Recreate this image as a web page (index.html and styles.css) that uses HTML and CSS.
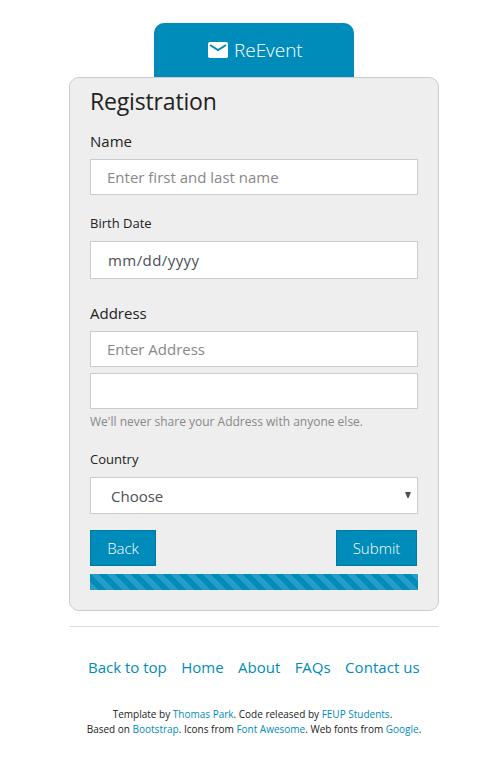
FILE: index.html
```html
<!DOCTYPE html>
<html lang="en">
<head>
<meta charset="utf-8">
<title>ReEvent</title>
<link rel="stylesheet" href="styles.css">
</head>
<body>
<div class="page">
  <header class="brand">
    <svg class="brand-icon" viewBox="0 0 20 16" width="20" height="16"><rect width="20" height="16" rx="1.8" fill="#fff"/><path d="M2 3l8 5 8-5" fill="none" stroke="#008cba" stroke-width="2"/></svg>
    <span class="brand-name">ReEvent</span>
  </header>
  <main class="card">
    <h1 class="title">Registration</h1>
    <div class="field name">
      <label class="label">Name</label>
      <div class="control placeholder"><span>Enter first and last name</span></div>
    </div>
    <div class="field birth">
      <label class="label small">Birth Date</label>
      <div class="control date"><span>mm/dd/yyyy</span></div>
    </div>
    <div class="field address">
      <label class="label">Address</label>
      <div class="control placeholder"><span>Enter Address</span></div>
      <div class="control"></div>
      <p class="help">We'll never share your Address with anyone else.</p>
    </div>
    <div class="field country">
      <label class="label small">Country</label>
      <div class="control select"><span>Choose</span><svg class="arrow" viewBox="0 0 6 6" width="6" height="6"><path d="M0 0h6L3.5 6h-1z" fill="#495057"/></svg></div>
    </div>
    <div class="actions">
      <button class="btn back">Back</button>
      <button class="btn submit">Submit</button>
    </div>
    <div class="progress"></div>
  </main>
  <footer class="footer">
    <nav class="links"><a>Back to top</a><a>Home</a><a>About</a><a>FAQs</a><a class="contact">Contact us</a></nav>
    <p class="credit release"><span>Template by <a>Thomas Park</a>. Code released by <a>FEUP Students</a>.</span></p>
    <p class="credit"><span>Based on <a>Bootstrap</a>. Icons from <a>Font Awesome</a>. Web fonts from <a>Google</a>.</span></p>
  </footer>
</div>
</body>
</html>
```
FILE: styles.css
```css
* { box-sizing: border-box; }
body {
  margin: 0;
  background: #fff;
  color: #222;
  font: 400 15px/22px "Open Sans", "Liberation Sans", sans-serif;
}
span { white-space: nowrap; }
a { color: #008cba; text-decoration: none; }
.page { width: 370px; margin: 0 0 0 69px; padding-top: 23px; }
.brand {
  display: flex;
  align-items: center;
  width: 200px;
  height: 54px;
  margin-left: 85px;
  padding-left: 54px;
  border-radius: 10px 10px 0 0;
  background: #008cba;
  color: #fff;
  font-size: 19px;
  font-weight: 300;
}
.brand-icon { margin-right: 6px; }
.brand-name { letter-spacing: -.05px; }
.card {
  height: 534px;
  padding: 7px 20px 0;
  border: 1px solid #ccc;
  border-radius: 10px;
  background: #eee;
}
.title { margin: 0; font-size: 23px; line-height: 32px; font-weight: 400; letter-spacing: -.17px; }
.label { display: block; height: 22px; }
.small { font-size: 13px; }
.name { margin-top: 13px; }
.control {
  display: flex;
  align-items: center;
  height: 36px;
  margin-top: 6px;
  padding: 0 16px;
  border: 1px solid #ccc;
  background: #fff;
  color: #495057;
}
.label + .control { margin-top: 7px; }
.placeholder { color: #888; }
.birth { margin-top: 17px; }
.control.date { height: 38px; padding-left: 17px; letter-spacing: .43px; }
.address { margin-top: 23px; }
.help { margin: 3px 0 0; color: #888; font-size: 12px; line-height: 20px; }
.country { margin-top: 16px; }
.control.select { height: 37px; padding: 0 6px 0 20px; justify-content: space-between; }
.arrow { margin-bottom: 1px; }
.actions { display: flex; justify-content: space-between; margin: 16px 1px 0 0; }
.btn {
  height: 36px;
  padding: 0;
  border: 1px solid #0079a1;
  background: #008cba;
  color: #fff;
  font: 300 15px/22px "Open Sans", sans-serif;
}
.back { width: 66px; }
.submit { width: 81px; }
.progress {
  height: 16px;
  margin-top: 8px;
  background: #008cba linear-gradient(45deg, rgba(255,255,255,.15) 25%, transparent 25%, transparent 50%, rgba(255,255,255,.15) 50%, rgba(255,255,255,.15) 75%, transparent 75%) 0 0 / 16px 16px;
}
.footer { margin-top: 15px; padding-top: 29px; border-top: 1px solid #ddd; }
.links { display: flex; gap: 14.4px; margin: 0 0 29px 19px; white-space: nowrap; }
.contact { letter-spacing: .06px; }
.credit { display: flex; justify-content: center; margin: 0; font-size: 10px; line-height: 15px; }
.release { margin-right: 3px; }
```
